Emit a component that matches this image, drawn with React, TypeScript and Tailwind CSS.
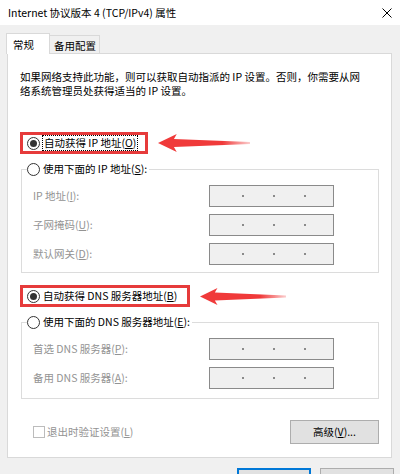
import type { ReactNode } from "react"

const Key = ({ k }: { k: string }) => <span className="underline underline-offset-[1px]">{k}</span>

const Radio = ({ checked }: { checked?: boolean }) => (
  <span className="flex h-[13px] w-[13px] shrink-0 items-center justify-center rounded-full border border-[#333] bg-white">
    {checked && <span className="h-[7px] w-[7px] rounded-full bg-[#333]" />}
  </span>
)

const IpBox = () => (
  <div className="flex h-[22px] w-[125px] items-center gap-[29px] border border-[#8a8a8a] bg-[#f0f0f0] pl-[32px]">
    <span className="h-[2px] w-[2px] bg-[#8a8a8a]" />
    <span className="h-[2px] w-[2px] bg-[#8a8a8a]" />
    <span className="h-[2px] w-[2px] bg-[#8a8a8a]" />
  </div>
)

const Field = ({ label }: { label: ReactNode }) => (
  <div className="flex h-[22px] items-center">
    <span className="w-[176px] text-[#939393]">{label}</span>
    <IpBox />
  </div>
)

const Arrow = ({ id, w, h }: { id: string; w: number; h: number }) => {
  const m = h / 2
  const pts = `1,${m} ${w * 0.21},1 ${w * 0.18},${m - 4} ${w - 1},${m - 1} ${w - 1},${m + 1} ${w * 0.18},${m + 4} ${w * 0.21},${h - 1}`
  return (
    <svg width={w} height={h} viewBox={`0 0 ${w} ${h}`}>
      <defs>
        <linearGradient id={id} x1="0" x2="1" y1="0" y2="0">
          <stop offset="0" stopColor="#f03a3a" />
          <stop offset="0.7" stopColor="#f03a3a" />
          <stop offset="1" stopColor="#f03a3a" stopOpacity="0.25" />
        </linearGradient>
      </defs>
      <polygon points={pts} fill={`url(#${id})`} />
    </svg>
  )
}

const Group = ({ legend, children, pb }: { legend: ReactNode; children: ReactNode; pb: string }) => (
  <fieldset className="mt-[8px] ml-[1px] border border-[#dcdcdc]">
    <legend className="ml-[5px] flex items-center gap-[3px] pr-[2px] leading-[14px]">
      <Radio />
      <span>{legend}</span>
    </legend>
    <div className={`flex flex-col gap-[7px] pt-[9px] pl-[11px] ${pb}`}>{children}</div>
  </fieldset>
)

export default function App() {
  return (
    <div className="h-[474px] w-[409px] overflow-hidden bg-white font-['Noto_Sans_CJK_SC',sans-serif] text-[10.5px] text-black">
      <div className="flex h-[25px] items-center justify-between pr-[17px] pl-[8px]">
        <span>Internet 协议版本 4 (TCP/IPv4) 属性</span>
        <svg width="10" height="10" viewBox="0 0 10 10">
          <path d="M0.5 0.5 L9.5 9.5 M9.5 0.5 L0.5 9.5" stroke="#000" strokeWidth="1" />
        </svg>
      </div>

      <div className="h-[449px] w-[400px] bg-[#f0f0f0] pt-[8px] pl-[6px]">
        <div className="flex h-[20px] items-end">
          <div className="relative z-10 -mb-[1px] flex h-[21px] w-[44px] items-center border border-b-0 border-[#d9d9d9] bg-white pt-[2px] pl-[6px]">
            常规
          </div>
          <div className="flex h-[18px] w-[50px] items-center border-t border-r border-[#d9d9d9] pt-[2px] pl-[4px]">
            备用配置
          </div>
        </div>

        <div className="ml-[1px] h-[405px] w-[385px] border border-[#d9d9d9] bg-white px-[12px]">
          <p className="mt-[16px] leading-[14px]">
            如果网络支持此功能，则可以获取自动指派的 IP 设置。否则，你需要从网
            <br />
            络系统管理员处获得适当的 IP 设置。
          </p>

          <div className="mt-[34px] flex items-center gap-[9px]">
            <div className="flex h-[22px] w-[128px] items-center border-[3px] border-[#e63b3b] pl-[4px]">
              <Radio checked />
              <span className="ml-[2px] border border-dotted border-black px-[1px] leading-[14px]">
                自动获得 IP 地址(<Key k="O" />)
              </span>
            </div>
            <Arrow id="a1" w={94} h={20} />
          </div>

          <Group legend={<>使用下面的 IP 地址(<Key k="S" />):</>} pb="pb-[7px]">
            <Field label={<>IP 地址(<Key k="I" />):</>} />
            <Field label={<>子网掩码(<Key k="U" />):</>} />
            <Field label={<>默认网关(<Key k="D" />):</>} />
          </Group>

          <div className="mt-[12px] flex items-center gap-[9px]">
            <div className="flex h-[22px] w-[170px] items-center gap-[3px] border-[3px] border-[#e63b3b] pl-[4px] leading-[14px]">
              <Radio checked />
              <span>
                自动获得 DNS 服务器地址(<Key k="B" />)
              </span>
            </div>
            <Arrow id="a2" w={88} h={19} />
          </div>

          <Group legend={<>使用下面的 DNS 服务器地址(<Key k="E" />):</>} pb="pb-[9px]">
            <Field label={<>首选 DNS 服务器(<Key k="P" />):</>} />
            <Field label={<>备用 DNS 服务器(<Key k="A" />):</>} />
          </Group>

          <div className="mt-[21px] flex h-[24px] items-center justify-between">
            <div className="ml-[13px] flex items-center gap-[2px] text-[#939393]">
              <span className="h-[12px] w-[12px] border border-[#bcbcbc] bg-white" />
              <span>
                退出时验证设置(<Key k="L" />)
              </span>
            </div>
            <button className="flex h-[24px] w-[89px] items-center justify-center border border-[#adadad] bg-[#e1e1e1]">
              高级(<Key k="V" />)...
            </button>
          </div>
        </div>

        {/* OK / Cancel: only their top edge is inside the window */}
        <div className="mt-[10px] flex justify-end gap-[9px] pr-[6px]">
          <button className="h-[23px] w-[74px] border-2 border-[#0078d7] bg-[#e1e1e1]" aria-label="确定" />
          <button className="h-[23px] w-[74px] border border-[#adadad] bg-[#e1e1e1]" aria-label="取消" />
        </div>
      </div>
    </div>
  )
}
